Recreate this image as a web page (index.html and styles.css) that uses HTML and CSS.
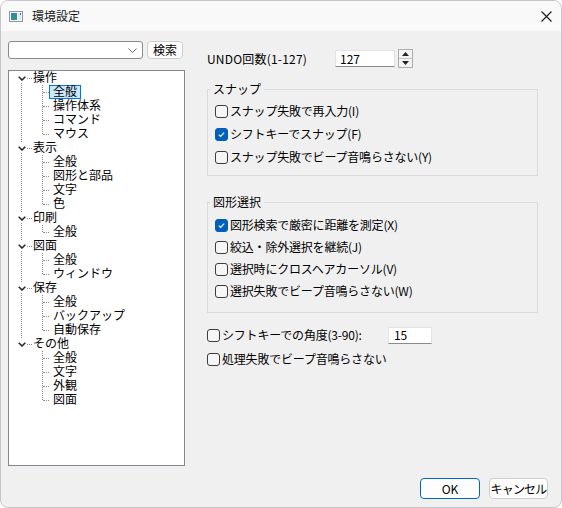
FILE: index.html
```html
<!DOCTYPE html>
<html lang="ja">
<head>
<meta charset="utf-8">
<title>環境設定</title>
<link rel="stylesheet" href="styles.css">
</head>
<body>
<div class="window">
  <div class="titlebar">
    <svg class="app-icon" width="14" height="11" viewBox="0 0 14 11">
      <defs>
        <linearGradient id="g1" x1="0" y1="0" x2="0" y2="1">
          <stop offset="0" stop-color="#3b7fc4"/>
          <stop offset="1" stop-color="#2e9a6e"/>
        </linearGradient>
      </defs>
      <rect x="0.5" y="0.5" width="13" height="10" fill="#f4f8fb" stroke="#8e969e"/>
      <rect x="2" y="2" width="6" height="7" fill="url(#g1)"/>
      <rect x="9" y="2" width="3" height="7" fill="#dfe9f2"/>
      <rect x="11" y="2" width="1" height="2" fill="#5a6d80"/>
    </svg>
    <span class="title">環境設定</span>
    <svg class="close" width="11" height="11" viewBox="0 0 11 11">
      <path d="M0.5 0.5 L10.5 10.5 M10.5 0.5 L0.5 10.5" stroke="#1a1a1a" stroke-width="1.1" fill="none"/>
    </svg>
  </div>

  <div class="body">
    <div class="left">
      <div class="search-row">
        <div class="combo">
          <svg width="9" height="5" viewBox="0 0 9 5"><path d="M0.5 0.5 L4.5 4.5 L8.5 0.5" stroke="#6a6a6a" fill="none" stroke-width="1"/></svg>
        </div>
        <button class="btn btn-search">検索</button>
      </div>
      <div class="tree">
        <div class="node">
          <div class="row parent"><span class="exp"><svg width="8" height="5" viewBox="0 0 8 5"><path d="M0.7 0.7 L4 4 L7.3 0.7" stroke="#222" stroke-width="1.5" fill="none"/></svg></span><span class="pdots"></span><span class="label">操作</span></div>
          <div class="children">
            <div class="row child"><span class="cdots"></span><span class="label sel">全般</span></div>
            <div class="row child"><span class="cdots"></span><span class="label">操作体系</span></div>
            <div class="row child"><span class="cdots"></span><span class="label">コマンド</span></div>
            <div class="row child"><span class="cdots"></span><span class="label">マウス</span></div>
          </div>
        </div>
        <div class="node">
          <div class="row parent"><span class="exp"><svg width="8" height="5" viewBox="0 0 8 5"><path d="M0.7 0.7 L4 4 L7.3 0.7" stroke="#222" stroke-width="1.5" fill="none"/></svg></span><span class="pdots"></span><span class="label">表示</span></div>
          <div class="children">
            <div class="row child"><span class="cdots"></span><span class="label">全般</span></div>
            <div class="row child"><span class="cdots"></span><span class="label">図形と部品</span></div>
            <div class="row child"><span class="cdots"></span><span class="label">文字</span></div>
            <div class="row child"><span class="cdots"></span><span class="label">色</span></div>
          </div>
        </div>
        <div class="node">
          <div class="row parent"><span class="exp"><svg width="8" height="5" viewBox="0 0 8 5"><path d="M0.7 0.7 L4 4 L7.3 0.7" stroke="#222" stroke-width="1.5" fill="none"/></svg></span><span class="pdots"></span><span class="label">印刷</span></div>
          <div class="children">
            <div class="row child"><span class="cdots"></span><span class="label">全般</span></div>
          </div>
        </div>
        <div class="node">
          <div class="row parent"><span class="exp"><svg width="8" height="5" viewBox="0 0 8 5"><path d="M0.7 0.7 L4 4 L7.3 0.7" stroke="#222" stroke-width="1.5" fill="none"/></svg></span><span class="pdots"></span><span class="label">図面</span></div>
          <div class="children">
            <div class="row child"><span class="cdots"></span><span class="label">全般</span></div>
            <div class="row child"><span class="cdots"></span><span class="label">ウィンドウ</span></div>
          </div>
        </div>
        <div class="node">
          <div class="row parent"><span class="exp"><svg width="8" height="5" viewBox="0 0 8 5"><path d="M0.7 0.7 L4 4 L7.3 0.7" stroke="#222" stroke-width="1.5" fill="none"/></svg></span><span class="pdots"></span><span class="label">保存</span></div>
          <div class="children">
            <div class="row child"><span class="cdots"></span><span class="label">全般</span></div>
            <div class="row child"><span class="cdots"></span><span class="label">バックアップ</span></div>
            <div class="row child"><span class="cdots"></span><span class="label">自動保存</span></div>
          </div>
        </div>
        <div class="node last">
          <div class="row parent"><span class="exp"><svg width="8" height="5" viewBox="0 0 8 5"><path d="M0.7 0.7 L4 4 L7.3 0.7" stroke="#222" stroke-width="1.5" fill="none"/></svg></span><span class="pdots"></span><span class="label">その他</span></div>
          <div class="children">
            <div class="row child"><span class="cdots"></span><span class="label">全般</span></div>
            <div class="row child"><span class="cdots"></span><span class="label">文字</span></div>
            <div class="row child"><span class="cdots"></span><span class="label">外観</span></div>
            <div class="row child"><span class="cdots"></span><span class="label">図面</span></div>
          </div>
        </div>
      </div>
    </div>

    <div class="right">
      <div class="undo-row">
        <span class="undo-label">UNDO回数(1-127)</span>
        <div class="num-input">127</div>
        <div class="spin">
          <div class="spin-half"><svg width="7" height="4" viewBox="0 0 7 4"><path d="M3.5 0 L7 4 L0 4 Z" fill="#222"/></svg></div>
          <div class="spin-half"><svg width="7" height="4" viewBox="0 0 7 4"><path d="M0 0 L7 0 L3.5 4 Z" fill="#222"/></svg></div>
        </div>
      </div>

      <fieldset class="group group-snap">
        <legend>スナップ</legend>
        <div class="cb-row"><span class="cb"></span><span>スナップ失敗で再入力(I)</span></div>
        <div class="cb-row"><span class="cb checked"><svg width="11" height="11" viewBox="0 0 11 11"><path d="M2.8 5.6 L4.6 7.4 L8.2 3.6" stroke="#fff" stroke-width="1.1" fill="none"/></svg></span><span>シフトキーでスナップ(F)</span></div>
        <div class="cb-row"><span class="cb"></span><span>スナップ失敗でビープ音鳴らさない(Y)</span></div>
      </fieldset>

      <fieldset class="group group-sel">
        <legend>図形選択</legend>
        <div class="cb-row"><span class="cb checked"><svg width="11" height="11" viewBox="0 0 11 11"><path d="M2.8 5.6 L4.6 7.4 L8.2 3.6" stroke="#fff" stroke-width="1.1" fill="none"/></svg></span><span>図形検索で厳密に距離を測定(X)</span></div>
        <div class="cb-row"><span class="cb"></span><span>絞込・除外選択を継続(J)</span></div>
        <div class="cb-row"><span class="cb"></span><span>選択時にクロスヘアカーソル(V)</span></div>
        <div class="cb-row"><span class="cb"></span><span>選択失敗でビープ音鳴らさない(W)</span></div>
      </fieldset>

      <div class="cb-row plain first">
        <span class="cb"></span><span class="angle-label">シフトキーでの角度(3-90):</span>
        <div class="num-input angle">15</div>
      </div>
      <div class="cb-row plain">
        <span class="cb"></span><span>処理失敗でビープ音鳴らさない</span>
      </div>
    </div>
  </div>

  <div class="footer">
    <button class="btn btn-ok">OK</button>
    <button class="btn btn-cancel">キャンセル</button>
  </div>
</div>
</body>
</html>
```

FILE: styles.css
```css
html, body {
  margin: 0;
  padding: 0;
  background: #ffffff;
}

.window {
  width: 562px;
  height: 508px;
  box-sizing: border-box;
  border: 1px solid #c6c6c6;
  border-radius: 8px;
  background: #f0f0f0;
  display: flex;
  flex-direction: column;
  overflow: hidden;
  font-family: "Noto Sans CJK JP", "Noto Sans", sans-serif;
  font-size: 12px;
  color: #000;
}

.titlebar {
  height: 30px;
  flex: none;
  background: #f9f9f9;
  display: flex;
  align-items: center;
  padding-left: 8px;
}

.app-icon {
  display: block;
}

.title {
  margin-left: 9px;
  font-size: 12px;
  line-height: 14px;
  color: #1a1a1a;
}

.close {
  display: block;
  margin-left: auto;
  margin-right: 9px;
}

.body {
  display: flex;
  gap: 22px;
  padding: 10px 0 0 7px;
  flex: none;
}

.left {
  width: 177px;
  display: flex;
  flex-direction: column;
}

.search-row {
  display: flex;
  height: 18px;
  gap: 4px;
}

.combo {
  width: 135px;
  height: 18px;
  box-sizing: border-box;
  background: #fff;
  border: 1px solid #8a8a8a;
  border-radius: 3px;
  display: flex;
  align-items: center;
  justify-content: flex-end;
  padding-right: 5px;
}

.combo svg {
  display: block;
}

.btn {
  font-family: "Noto Sans CJK JP", "Noto Sans", sans-serif;
  font-size: 12px;
  color: #000;
  background: #fdfdfd;
  border: 1px solid #cfcfcf;
  border-radius: 4px;
  padding: 0;
  margin: 0;
  line-height: 14px;
  white-space: nowrap;
  box-sizing: border-box;
}

.btn-search {
  width: 36px;
  height: 18px;
}

.tree {
  margin-top: 11px;
  height: 396px;
  box-sizing: border-box;
  border: 1px solid #828790;
  background: #fff;
  font-family: "Liberation Sans", "Noto Sans CJK JP", sans-serif;
}

.node {
  position: relative;
}

.node::before {
  content: "";
  position: absolute;
  left: 12px;
  top: 7px;
  bottom: -7px;
  border-left: 1px dotted #8a8a8a;
}

.node.last::before {
  display: none;
}

.row {
  height: 14px;
  display: flex;
  align-items: center;
  line-height: 14px;
  position: relative;
}

.exp {
  margin-left: 8px;
  width: 9px;
  height: 10px;
  background: #fff;
  display: flex;
  align-items: center;
  justify-content: center;
  position: relative;
  z-index: 1;
}

.exp svg {
  display: block;
}

.pdots {
  width: 5px;
  margin-left: 1px;
  margin-right: 1px;
  border-top: 1px dotted #8a8a8a;
}

.children {
  position: relative;
}

.children::before {
  content: "";
  position: absolute;
  left: 33px;
  top: 0;
  bottom: 7px;
  border-left: 1px dotted #8a8a8a;
}

.cdots {
  margin-left: 34px;
  width: 6px;
  border-top: 1px dotted #8a8a8a;
}

.label {
  padding: 0 3px;
  border: 1px solid transparent;
  height: 12px;
  line-height: 12px;
  white-space: nowrap;
}

.parent .label {
  padding: 0;
  border: none;
}

.label.sel {
  background: #cce8ff;
  border-color: #0078d7;
}

.right {
  width: 331px;
  margin-top: 8px;
  display: flex;
  flex-direction: column;
}

.undo-row {
  display: flex;
  align-items: center;
  height: 19px;
}

.undo-label {
  width: 128px;
  letter-spacing: 0.2px;
}

.num-input {
  width: 60px;
  height: 17px;
  box-sizing: border-box;
  background: #fff;
  border: 1px solid #e3e3e3;
  border-bottom-color: #8a8a8a;
  padding-left: 4px;
  display: flex;
  align-items: center;
  line-height: 14px;
}

.spin {
  margin-left: 3px;
  width: 15px;
  height: 19px;
  box-sizing: border-box;
  border: 1px solid #adadad;
  background: #f3f3f3;
  display: flex;
  flex-direction: column;
}

.spin-half {
  flex: 1;
  display: flex;
  align-items: center;
  justify-content: center;
}

.spin-half + .spin-half {
  border-top: 1px solid #c4c4c4;
}

.spin-half svg {
  display: block;
}

.group {
  margin: 14px 0 0 0;
  padding: 4px 0 7px 7px;
  border: 1px solid #dadada;
  width: 331px;
  box-sizing: border-box;
  min-width: 0;
}

.group legend {
  padding: 0 3px;
  margin-left: -5px;
  line-height: 14px;
  font-size: 12px;
}

.group-sel {
  margin-top: 19px;
  padding-top: 5px;
  padding-bottom: 10px;
}

.cb-row {
  display: flex;
  align-items: center;
  height: 22px;
  gap: 2px;
  white-space: nowrap;
  line-height: 14px;
  letter-spacing: -0.2px;
}

.group-snap .cb-row + .cb-row {
  margin-top: 1px;
}

.cb {
  width: 13px;
  height: 13px;
  box-sizing: border-box;
  border: 1px solid #3c3c3c;
  border-radius: 3px;
  background: #f6f6f6;
  flex: none;
  display: flex;
  align-items: center;
  justify-content: center;
}

.cb.checked {
  background: #005fb8;
  border-color: #005fb8;
}

.cb svg {
  display: block;
}

.cb-row.plain {
  height: 18px;
  margin-top: 6px;
}

.cb-row.plain.first {
  margin-top: 13px;
}

.angle-label {
  width: 164px;
}

.num-input.angle {
  width: 44px;
  padding-left: 5px;
}

.footer {
  display: flex;
  justify-content: flex-end;
  gap: 9px;
  padding: 12px 13px 0 0;
}

.btn-ok {
  width: 60px;
  height: 21px;
  border-color: #0067c0;
}

.btn-cancel {
  width: 59px;
  height: 21px;
  letter-spacing: -0.8px;
}
```
